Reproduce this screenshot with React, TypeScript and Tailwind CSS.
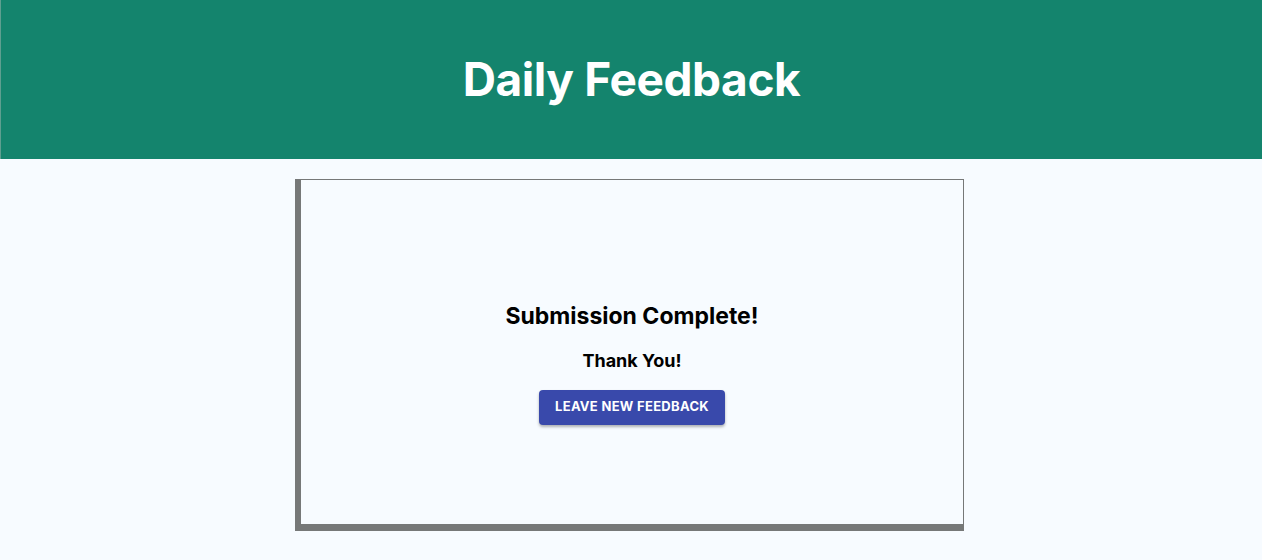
export default function App() {
  return (
    <div className="min-h-[560px] bg-[#f7fbff]" style={{ fontFamily: "Inter, 'Noto Sans', sans-serif" }}>
      <header className="h-[159px] bg-[#14846d] flex items-center justify-center border-l border-[#5e9f90]">
        <h1 className="text-[46px] font-bold text-white tracking-[-0.4px] leading-none pb-[2px]">Daily Feedback</h1>
      </header>
      <div className="flex justify-center pt-[20px] pr-[3px]">
        <div className="w-[669px] h-[352px] border-t border-r border-l-[6px] border-b-[7px] border-[#767878] flex flex-col items-center justify-center pt-[25px]">
          <h2 className="text-[23px] font-bold text-black leading-none">Submission Complete!</h2>
          <p className="mt-[24px] text-[18px] font-bold text-black leading-none">Thank You!</p>
          <button className="mt-[20px] h-[35px] w-[186px] rounded-[4px] bg-[#3949ab] text-white text-[13px] font-bold tracking-[0.3px] uppercase shadow-[0_2px_3px_rgba(0,0,0,0.3)]">
            Leave new feedback
          </button>
        </div>
      </div>
    </div>
  );
}
